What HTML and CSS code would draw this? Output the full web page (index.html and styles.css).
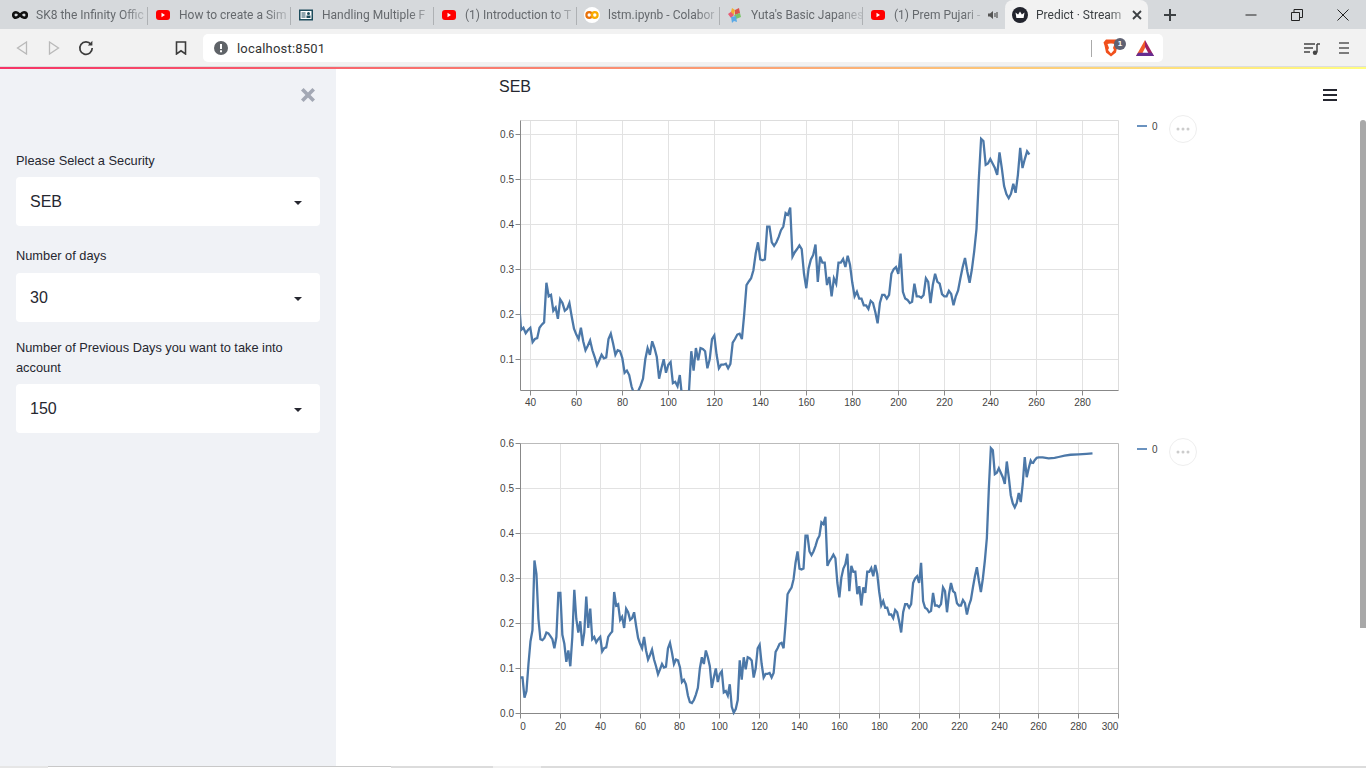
FILE: index.html
```html
<!DOCTYPE html>
<html lang="en">
<head>
<meta charset="utf-8">
<title>Predict · Streamlit</title>
<link rel="stylesheet" href="styles.css">
</head>
<body>
<div class="tabstrip">
  <div class="tab">
    <svg class="favicon" viewBox="0 0 16 16"><path class="infinity" d="M4 5.2a2.8 2.8 0 1 0 0 5.6c2.800 0 5.200-5.600 8-5.600a2.800 2.800 0 1 1 0 5.600c-2.800 0-5.200-5.600-8-5.600z"/></svg>
    <span class="tab-title">SK8 the Infinity Offic</span>
  </div>
  <div class="tab">
    <svg class="favicon" viewBox="0 0 16 16"><rect class="yt" x="1" y="3" width="14" height="10" rx="3"/><path class="yt-play" d="M6.500 5.800v4.400L10 8z"/></svg>
    <span class="tab-title">How to create a Sim</span>
  </div>
  <div class="tab">
    <svg class="favicon" viewBox="0 0 16 16"><rect class="slide" x="1" y="2.500" width="14" height="11"/><rect class="slide-in" x="2.500" y="4" width="11" height="8"/><rect class="slide" x="3.500" y="5.500" width="4" height="1"/><rect class="slide" x="3.500" y="7.500" width="4" height="1"/><rect class="slide" x="3.500" y="9.500" width="4" height="1"/><circle class="slide" cx="10.500" cy="6.500" r="1.500"/><rect class="slide" x="8.500" y="8.500" width="4" height="2.500"/></svg>
    <span class="tab-title">Handling Multiple F</span>
  </div>
  <div class="tab">
    <svg class="favicon" viewBox="0 0 16 16"><rect class="yt" x="1" y="3" width="14" height="10" rx="3"/><path class="yt-play" d="M6.500 5.800v4.400L10 8z"/></svg>
    <span class="tab-title">(1) Introduction to T</span>
  </div>
  <div class="tab">
    <svg class="favicon" viewBox="0 0 16 16"><circle class="colab-bg" cx="8" cy="8" r="8"/><circle class="colab-c" cx="5.200" cy="8" r="2.800"/><circle class="colab-o" cx="10.800" cy="8" r="2.800"/></svg>
    <span class="tab-title">lstm.ipynb - Colabor</span>
  </div>
  <div class="tab">
    <svg class="favicon" viewBox="0 0 16 16"><path class="yuta-a" d="M1 7l4-3 2 4-3 3z"/><path class="yuta-b" d="M5 1l3 2-1 5-3-3z"/><path class="yuta-c" d="M8 3l4-2 1 5-5 2z"/><path class="yuta-d" d="M7 8l6-2 1 4-5 2z"/><path class="yuta-e" d="M4 10l5-1 1 6-3-1-2 2z"/></svg>
    <span class="tab-title">Yuta's Basic Japanes</span>
  </div>
  <div class="tab">
    <svg class="favicon" viewBox="0 0 16 16"><rect class="yt" x="1" y="3" width="14" height="10" rx="3"/><path class="yt-play" d="M6.500 5.800v4.400L10 8z"/></svg>
    <span class="tab-title">(1) Prem Pujari -</span>
    <svg class="tab-audio" viewBox="0 0 12 12"><path class="audio-fill" d="M1 4.500h2L6 2v8L3 7.500H1z"/><path class="audio-line" d="M8 4v4M10 3v6"/></svg>
  </div>
  <div class="tab tab-active">
    <svg class="favicon" viewBox="0 0 16 16"><circle class="crown-bg" cx="8" cy="8" r="8"/><path class="crown" d="M3.500 5.500l2.600 2L8 4.500l1.900 3 2.600-2-.9 5.500H4.400z"/></svg>
    <span class="tab-title">Predict · Stream</span>
    <svg class="tab-close" viewBox="0 0 10 10"><path d="M1 1l8 8M9 1l-8 8"/></svg>
  </div>
  <svg class="new-tab" viewBox="0 0 12 12"><path d="M6 0v12M0 6h12"/></svg>
  <div class="window-controls">
    <svg class="win-btn" viewBox="0 0 12 12"><path d="M0.500 6h11"/></svg>
    <svg class="win-btn" viewBox="0 0 12 12"><path d="M0.500 3.500h8v8h-8zM3 3.500V0.500h8.500v8H8.500"/></svg>
    <svg class="win-btn" viewBox="0 0 12 12"><path d="M0.500 0.500l11 11M11.500 0.500l-11 11"/></svg>
  </div>
</div>

<div class="toolbar">
  <svg class="tool nav-back" viewBox="0 0 12 14"><path d="M10.500 1L1.500 7l9 6z"/></svg>
  <svg class="tool nav-forward" viewBox="0 0 12 14"><path d="M1.500 1l9 6-9 6z"/></svg>
  <svg class="tool nav-reload" viewBox="0 0 16 16"><path class="reload-arc" d="M13 4.500A6.200 6.200 0 1 0 14.200 8"/><path class="reload-head" d="M9.800 5.400h4.600V0.800z"/></svg>
  <svg class="tool nav-bookmark" viewBox="0 0 12 14"><path d="M1.500 1h9v12L6 9.800 1.500 13z"/></svg>
  <div class="omnibox">
    <svg class="omni-info" viewBox="0 0 14 14"><circle cx="7" cy="7" r="7"/><path d="M6 3h2v5H6zM6 9.300h2v2H6z"/></svg>
    <span class="omni-url">localhost:8501</span>
    <span class="omni-sep"></span>
    <span class="brave">
      <svg class="brave-icon" viewBox="0 0 16 18"><path class="brave-shield" d="M3 0.500h10l2.500 3-1 3-1.500 7-5 4-5-4-1.500-7-1-3z"/><path class="brave-face" d="M4.500 5l2.500-.5h2l2.500.5-1.500 4 1 2-3 3.500-3-3.500 1-2z"/></svg>
      <span class="brave-badge">1</span>
    </span>
    <svg class="bat" viewBox="0 0 18 16"><path class="bat-left" d="M9 0L0 16h5l4-8z"/><path class="bat-right" d="M9 0l9 16h-4L9 7z"/><path class="bat-bottom" d="M0 16h18l-2.200-3.200H2z"/></svg>
  </div>
  <svg class="playlist" viewBox="0 0 16 12"><path class="pl-line" d="M0 1h11M0 5h9M0 9h6"/><path class="pl-stem" d="M13 1v8.500"/><circle class="pl-note" cx="11" cy="9.700" r="2.200"/><path class="pl-stem" d="M13 1h3"/></svg>
  <svg class="kebab" viewBox="0 0 10 12"><path d="M0 1h10M0 6h10M0 11h10"/></svg>
</div>
<div class="decoration"></div>

<div class="app">
  <aside class="sidebar">
    <svg class="sidebar-close" viewBox="0 0 14 14"><path d="M2 2l10 10M12 2L2 12"/></svg>
    <div class="field">
      <label class="field-label">Please Select a Security</label>
      <div class="select"><span>SEB</span><i class="caret"></i></div>
    </div>
    <div class="field field-tight">
      <label class="field-label field-label-wide">Number of days</label>
      <div class="select"><span>30</span><i class="caret"></i></div>
    </div>
    <div class="field">
      <label class="field-label">Number of Previous Days you want to take into account</label>
      <div class="select"><span>150</span><i class="caret"></i></div>
    </div>
  </aside>

  <main class="main">
    <svg class="hamburger" viewBox="0 0 14 12"><path d="M0 1h14M0 6h14M0 11h14"/></svg>
    <div class="page-title">SEB</div>

    <svg class="chart" width="720" height="300" viewBox="0 0 720 300">
      <defs>
        <clipPath id="plot-clip-1"><rect x="30.500" y="10.500" width="598" height="270"/></clipPath>
        <polyline id="history" class="series" points="0,80 1,80 2,35 3,50 4,110 5,160 6,185 7,340 8,310 9,210 10,165 11,163 12,168 13,180 14,178 15,172 16,165 17,145 18,170 19,268 20,268 21,175 22,155 23,115 24,140 25,105 26,170 27,275 28,210 29,180 30,205 31,150 32,180 33,260 34,190 35,233 36,165 37,170 38,158 39,165 40,170 41,138 42,145 43,147 44,170 45,177 46,182 47,270 48,240 49,243 50,208 51,215 52,190 53,233 54,225 55,208 56,212 57,225 58,195 59,168 60,155 61,145 62,170 63,140 64,120 65,130 66,142 67,120 68,105 69,87 70,98 71,110 72,102 73,104 74,145 75,157 76,135 77,110 78,120 79,118 80,103 81,70 82,75 83,65 84,40 85,25 86,23 87,30 88,42 89,57 90,100 91,125 92,110 93,140 94,125 95,105 96,57 97,80 98,100 99,70 100,88 101,94 102,47 103,50 104,40 105,65 106,15 107,2 108,10 109,30 110,118 111,75 112,125 113,98 114,125 115,123 116,118 117,80 118,100 119,145 120,153 121,110 122,80 123,88 124,88 125,90 126,80 127,90 128,137 129,145 130,155 131,157 132,145 133,200 134,265 135,273 136,280 137,298 138,335 139,360 140,322 141,320 142,322 143,395 144,395 145,360 146,352 147,360 148,372 149,387 150,395 151,425 152,421 153,437 154,328 155,338 156,345 157,353 158,345 159,290 160,258 161,302 162,322 163,332 164,355 165,272 166,328 167,315 168,315 169,265 170,283 171,240 172,280 173,268 174,315 175,315 176,323 177,305 178,330 179,310 180,270 181,240 182,250 183,235 184,235 185,220 186,220 187,212 188,230 189,225 190,205 191,180 192,225 193,243 194,243 195,235 196,243 197,290 198,300 199,305 200,290 201,335 202,250 203,235 204,232 205,225 206,228 207,268 208,240 209,240 210,237 211,243 212,280 213,272 214,225 215,265 216,290 217,272 218,268 219,245 220,240 221,240 222,252 223,245 224,220 225,240 226,253 227,280 228,305 229,325 230,295 231,270 232,300 233,340 234,390 235,500 236,590 237,585 238,532 239,535 240,545 241,535 242,525 243,510 244,560 245,525 246,485 247,467 248,458 249,468 250,490 251,470 252,510 253,570 254,525 255,545 256,562 257,555"/>
        <polyline id="forecast" class="series" points="257,555 258,563 259,568 260,569 262,569 265,567 268,568 270,570 273,573 276,575 280,576 284,577 287,578"/>
      </defs>
      <g class="grid">
        <path d="M30.500 24.500h598M30.500 69.500h598M30.500 114.500h598M30.500 159.500h598M30.500 204.500h598M30.500 249.500h598"/>
        <path d="M40.500 10.500v270M86.500 10.500v270M132.500 10.500v270M178.500 10.500v270M224.500 10.500v270M270.500 10.500v270M316.500 10.500v270M362.500 10.500v270M408.500 10.500v270M454.500 10.500v270M500.500 10.500v270M546.500 10.500v270M592.500 10.500v270"/>
      </g>
      <path class="frame" d="M30.500 10.500h598v270"/>
      <path class="axis" d="M25.500 24.500h5M25.500 69.500h5M25.500 114.500h5M25.500 159.500h5M25.500 204.500h5M25.500 249.500h5M40.500 280.500v5M86.500 280.500v5M132.500 280.500v5M178.500 280.500v5M224.500 280.500v5M270.500 280.500v5M316.500 280.500v5M362.500 280.500v5M408.500 280.500v5M454.500 280.500v5M500.500 280.500v5M546.500 280.500v5M592.500 280.500v5"/>
      <path class="axis" d="M30.500 10.500v270h598"/>
      <g clip-path="url(#plot-clip-1)"><use href="#history" transform="matrix(2.3 0 0 -.45 -51.700 294.300)"/></g>
      <g class="tick-y">
        <text x="24" y="28">0.6</text><text x="24" y="73">0.5</text><text x="24" y="118">0.4</text><text x="24" y="163">0.3</text><text x="24" y="208">0.2</text><text x="24" y="253">0.1</text>
      </g>
      <g class="tick-x">
        <text x="40.500" y="295.500">40</text><text x="86.500" y="295.500">60</text><text x="132.500" y="295.500">80</text><text x="178.500" y="295.500">100</text><text x="224.500" y="295.500">120</text><text x="270.500" y="295.500">140</text><text x="316.500" y="295.500">160</text><text x="362.500" y="295.500">180</text><text x="408.500" y="295.500">200</text><text x="454.500" y="295.500">220</text><text x="500.500" y="295.500">240</text><text x="546.500" y="295.500">260</text><text x="592.500" y="295.500">280</text>
      </g>
      <path class="legend-line" d="M647 16h10"/>
      <text class="legend-text" x="662" y="19.500">0</text>
      <circle class="actions" cx="693" cy="19" r="13.500"/>
      <g class="actions-dots"><circle cx="688" cy="19" r="1.500"/><circle cx="693" cy="19" r="1.500"/><circle cx="698" cy="19" r="1.500"/></g>
    </svg>

    <svg class="chart chart-second" width="720" height="310" viewBox="0 0 720 310">
      <g class="grid">
        <path d="M30.500 55.500h598M30.500 100.500h598M30.500 145.500h598M30.500 190.500h598M30.500 235.500h598"/>
        <path d="M70.500 10.500v270M110.500 10.500v270M150.500 10.500v270M189.500 10.500v270M229.500 10.500v270M269.500 10.500v270M309.500 10.500v270M349.500 10.500v270M389.500 10.500v270M429.500 10.500v270M469.500 10.500v270M509.500 10.500v270M548.500 10.500v270M588.500 10.500v270"/>
      </g>
      <path class="frame frame-dark" d="M30.500 10.500h598v270"/>
      <path class="axis" d="M25.500 10.500h5M25.500 55.500h5M25.500 100.500h5M25.500 145.500h5M25.500 190.500h5M25.500 235.500h5M25.500 280.500h5M30.500 280.500v5M70.500 280.500v5M110.500 280.500v5M150.500 280.500v5M189.500 280.500v5M229.500 280.500v5M269.500 280.500v5M309.500 280.500v5M349.500 280.500v5M389.500 280.500v5M429.500 280.500v5M469.500 280.500v5M509.500 280.500v5M548.500 280.500v5M588.500 280.500v5M628.500 280.500v5"/>
      <path class="axis" d="M30.500 10.500v270h598"/>
      <g transform="matrix(1.993 0 0 -.45 30.500 280.500)"><use href="#history"/><use href="#forecast"/></g>
      <g class="tick-y">
        <text x="24" y="14">0.6</text><text x="24" y="59">0.5</text><text x="24" y="104">0.4</text><text x="24" y="149">0.3</text><text x="24" y="194">0.2</text><text x="24" y="239">0.1</text><text x="24" y="284">0.0</text>
      </g>
      <g class="tick-x">
        <text x="33" y="296.500">0</text><text x="70.500" y="296.500">20</text><text x="110.500" y="296.500">40</text><text x="150.500" y="296.500">60</text><text x="189.500" y="296.500">80</text><text x="229.500" y="296.500">100</text><text x="269.500" y="296.500">120</text><text x="309.500" y="296.500">140</text><text x="349.500" y="296.500">160</text><text x="389.500" y="296.500">180</text><text x="429.500" y="296.500">200</text><text x="469.500" y="296.500">220</text><text x="509.500" y="296.500">240</text><text x="548.500" y="296.500">260</text><text x="588.500" y="296.500">280</text><text x="620" y="296.500">300</text>
      </g>
      <path class="legend-line" d="M647 16h10"/>
      <text class="legend-text" x="662" y="19.500">0</text>
      <circle class="actions" cx="693" cy="19" r="13.500"/>
      <g class="actions-dots"><circle cx="688" cy="19" r="1.500"/><circle cx="693" cy="19" r="1.500"/><circle cx="698" cy="19" r="1.500"/></g>
    </svg>
    <div class="scroll-thumb"></div>
  </main>
</div>

<div class="bottom-strip">
  <span class="strip-a"></span>
  <span class="strip-b"></span>
  <span class="strip-c"></span>
  <span class="strip-d"></span>
  <span class="strip-e"></span>
</div>
</body>
</html>
```
FILE: styles.css
```css
* { box-sizing: border-box; }

html, body { margin: 0; height: 100%; }

body {
  width: 1366px;
  height: 768px;
  overflow: hidden;
  display: flex;
  flex-direction: column;
  font-family: "Liberation Sans", Arial, sans-serif;
  color: #262730;
  background: #fff;
}

/* Tab strip */
.tabstrip {
  flex: none;
  height: 29px;
  display: flex;
  align-items: stretch;
  padding-left: 5px;
  background: #d6d9dc;
  font-family: Roboto, "Noto Sans", sans-serif;
  font-size: 12px;
}

.tab {
  width: 143px;
  height: 29px;
  display: flex;
  align-items: center;
  padding-left: 7px;
  color: #65696d;
  position: relative;
}

.tab::after {
  content: "";
  position: absolute;
  right: 0;
  top: 7px;
  width: 1px;
  height: 18px;
  background: #aeb1b4;
}

.tab-active {
  background: #f2f2f2;
  border-radius: 8px 8px 0 0;
  color: #3c4043;
  transform: translateX(-1px);
}

.tab-active::after { display: none; }

.favicon { flex: none; width: 16px; height: 16px; margin-right: 8px; }

.tab-title {
  flex: 1;
  min-width: 0;
  overflow: hidden;
  white-space: nowrap;
  -webkit-mask-image: linear-gradient(90deg, #000 78%, rgba(0, 0, 0, .25) 97%);
  mask-image: linear-gradient(90deg, #000 78%, rgba(0, 0, 0, .25) 97%);
}

.infinity { fill: none; stroke: #111; stroke-width: 2.600; }
.yt { fill: #f00; }
.yt-play { fill: #fff; }
.slide { fill: #1e4d5c; }
.slide-in { fill: #fff; }
.colab-bg { fill: #fff; }
.colab-c, .colab-o { fill: none; stroke: #f9ab00; stroke-width: 2.200; }
.colab-c { stroke: #e8710a; }
.yuta-a { fill: #e85d75; }
.yuta-b { fill: #f2b134; }
.yuta-c { fill: #d9534f; }
.yuta-d { fill: #7cc36a; }
.yuta-e { fill: #5aa9e6; }
.crown-bg { fill: #23252e; }
.crown { fill: #fff; }

.tab-audio { flex: none; width: 12px; height: 12px; margin: 0 7px 0 3px; }
.audio-fill { fill: #555; }
.audio-line { fill: none; stroke: #555; stroke-width: 1.200; }

.tab-close {
  flex: none;
  width: 10px;
  height: 10px;
  margin: 0 6px 0 3px;
  fill: none;
  stroke: #3c4043;
  stroke-width: 1.800;
}

.new-tab {
  flex: none;
  width: 12px;
  height: 12px;
  margin: 9px 0 0 15px;
  fill: none;
  stroke: #3c4043;
  stroke-width: 2;
}

.window-controls {
  margin-left: auto;
  display: flex;
  gap: 34px;
  padding: 9px 17px 0 0;
}

.win-btn {
  width: 12px;
  height: 12px;
  fill: none;
  stroke: #222;
  stroke-width: 1;
}

/* Toolbar */
.toolbar {
  flex: none;
  height: 38px;
  display: flex;
  align-items: flex-start;
  background: #f2f2f2;
  border-bottom: 1px solid #ddd;
}

.tool { flex: none; fill: none; stroke-width: 1.300; }
.nav-back { width: 12px; height: 14px; margin: 12px 0 0 16px; stroke: #b9b9b9; }
.nav-forward { width: 12px; height: 14px; margin: 12px 0 0 20px; stroke: #b9b9b9; }
.nav-reload { width: 16px; height: 16px; margin: 11px 0 0 18px; overflow: visible; }
.reload-arc { stroke: #3c3c3c; stroke-width: 1.700; fill: none; }
.reload-head { fill: #3c3c3c; stroke: none; }
.nav-bookmark { width: 12px; height: 14px; margin: 12px 0 0 81px; stroke: #3c3c3c; stroke-width: 1.600; }

.omnibox {
  flex: none;
  width: 960px;
  height: 28px;
  margin: 5px 0 0 16px;
  background: #fff;
  border-radius: 5px;
  display: flex;
  align-items: center;
  padding-left: 11px;
}

.omni-info { width: 14px; height: 14px; fill: #5f6368; }
.omni-info path { fill: #fff; }

.omni-url {
  margin-left: 9px;
  font-size: 13px;
  color: #333;
  font-family: Roboto, "Noto Sans", sans-serif;
  letter-spacing: .2px;
}

.omni-sep {
  margin-left: auto;
  width: 1px;
  height: 17px;
  background: #aaa;
}

.brave {
  position: relative;
  width: 16px;
  height: 18px;
  margin-left: 11px;
}

.brave-icon { display: block; width: 16px; height: 18px; }
.brave-shield { fill: #f1501c; }
.brave-face { fill: #fff; }

.brave-badge {
  position: absolute;
  left: 11px;
  top: -1px;
  width: 12px;
  height: 12px;
  border-radius: 50%;
  background: #5f6273;
  color: #fff;
  font-size: 8px;
  line-height: 12px;
  text-align: center;
  font-weight: bold;
}

.bat { width: 18px; height: 16px; margin: 0 9px 0 17px; }
.bat-left { fill: #f15a2b; }
.bat-right { fill: #9e1f63; }
.bat-bottom { fill: #662d91; }

.playlist { flex: none; width: 16px; height: 12px; margin: 14px 0 0 141px; overflow: visible; }
.pl-line, .pl-stem { fill: none; stroke: #444; stroke-width: 1.500; }
.pl-note { fill: #444; }

.kebab {
  flex: none;
  width: 10px;
  height: 12px;
  margin: 13px 0 0 19px;
  fill: none;
  stroke: #555;
  stroke-width: 1.600;
}

.decoration {
  flex: none;
  height: 2px;
  background: linear-gradient(90deg, #f63366, #fffd80);
}

/* App */
.app {
  flex: 1;
  min-height: 0;
  display: flex;
}

.sidebar {
  flex: none;
  width: 336px;
  background: #f0f2f6;
  padding: 81px 16px 0;
  position: relative;
  font-size: 12.800px;
}

.sidebar-close {
  position: absolute;
  left: 300px;
  top: 18px;
  width: 16px;
  height: 16px;
  fill: none;
  stroke: #a3a8b4;
  stroke-width: 3.200;
}

.field { margin-bottom: 15px; }
.field:first-of-type { margin-bottom: 19px; }

.field-label {
  display: block;
  line-height: 20px;
  padding-top: 1px;
  margin-bottom: 6px;
  color: #262730;
}

.field-label-wide { margin-bottom: 7px; }

.select {
  height: 49px;
  background: #fff;
  border-radius: 4px;
  display: flex;
  align-items: center;
  justify-content: space-between;
  padding: 0 18px 0 14px;
  font-size: 16px;
}

.caret {
  width: 0;
  height: 0;
  border-left: 4px solid transparent;
  border-right: 4px solid transparent;
  border-top: 4px solid #262730;
  margin-top: 2px;
}

.main {
  flex: 1;
  min-width: 0;
  position: relative;
  padding-left: 154px;
}

.page-title {
  padding: 8px 0 0 9px;
  font-size: 16px;
  line-height: 20px;
  height: 27px;
}

.chart {
  display: block;
  margin-top: 14px;
  font-family: "Liberation Sans", Arial, sans-serif;
  font-size: 10px;
}

.chart-second { margin-top: 23px; }

.grid path { fill: none; stroke: #e2e2e2; stroke-width: 1; }
.frame { fill: none; stroke: #ddd; stroke-width: 1; }
.frame-dark { stroke: #bbb; }
.axis { fill: none; stroke: #888; stroke-width: 1; }
.series {
  fill: none;
  stroke: #4c78a8;
  stroke-width: 2.300;
  stroke-linejoin: miter;
  vector-effect: non-scaling-stroke;
}
.tick-y text { fill: #444; text-anchor: end; }
.tick-x text { fill: #444; text-anchor: middle; }
.legend-line { fill: none; stroke: #6a92bf; stroke-width: 2; }
.legend-text { fill: #444; }
.actions { fill: #fff; stroke: #eee; stroke-width: 1; }
.actions-dots circle { fill: #ccc; }

.hamburger {
  position: absolute;
  left: 987px;
  top: 20px;
  width: 14px;
  height: 12px;
  fill: none;
  stroke: #262730;
  stroke-width: 2;
}

.scroll-thumb {
  position: absolute;
  right: 0;
  top: 51px;
  width: 6px;
  height: 508px;
  border-radius: 3px 3px 0 0;
  background: #a8a8a8;
}

/* Bottom strip */
.bottom-strip {
  flex: none;
  height: 2px;
  display: flex;
  background: #dcdcdc;
}

.strip-a { width: 48px; background: #e6e6e6; }
.strip-b { width: 343px; background: #fff; border-top: 1px solid #c8c8c8; }
.strip-c { width: 102px; background: #dcdcdc; }
.strip-d { width: 48px; background: #f0f0f0; }
.strip-e { flex: 1; background: #dcdcdc; }
```
